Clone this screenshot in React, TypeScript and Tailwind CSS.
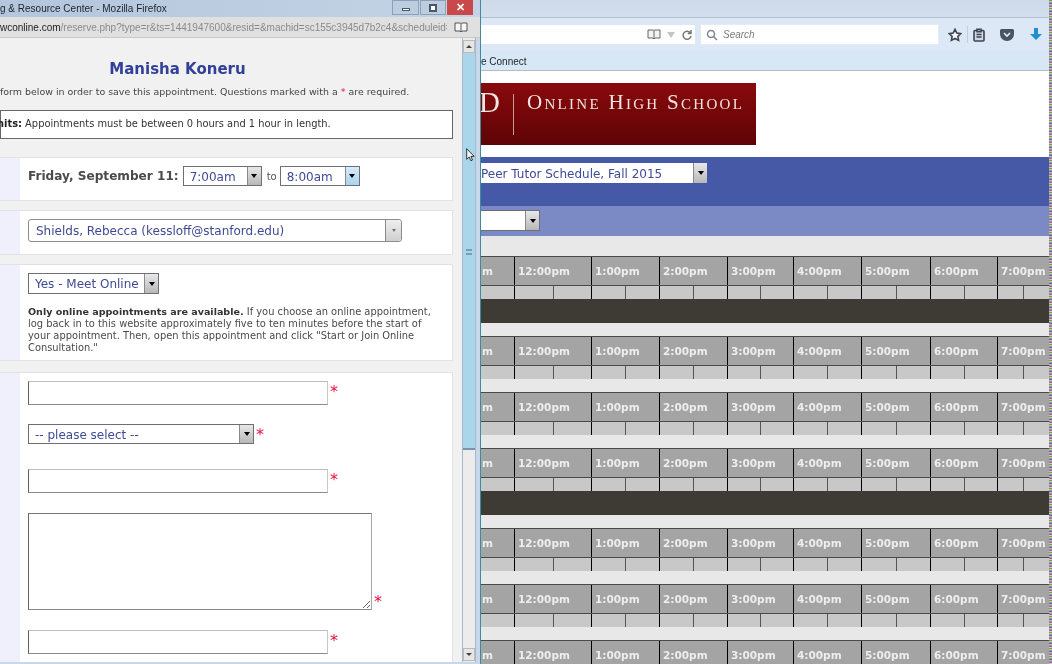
import type { ReactNode } from "react";

const VERDANA = "font-['DejaVu_Sans',sans-serif]";
const UI = "font-['Liberation_Sans',sans-serif]";

const HOURS = ["m", "12:00pm", "1:00pm", "2:00pm", "3:00pm", "4:00pm", "5:00pm", "6:00pm", "7:00pm"];
const DAYS = [true, false, false, true, false, false, false];
const COLS = "grid grid-cols-[33px_77px_68px_68px_66px_68px_69px_67px_52px]";

function Arrow({ small }: { small?: boolean }) {
  return small ? (
    <span className="h-0 w-0 border-x-[2px] border-t-[3px] border-x-transparent border-t-gray-500" />
  ) : (
    <span className="h-0 w-0 border-x-[3px] border-t-[4px] border-x-transparent border-t-black" />
  );
}

function Select({
  label,
  className,
  button = "w-[14px] bg-gradient-to-b from-[#e8e8e8] to-[#b8b8b8]",
  small,
}: {
  label: string;
  className: string;
  button?: string;
  small?: boolean;
}) {
  return (
    <div className={`flex shrink-0 items-stretch border border-[#6c6f78] bg-white ${className}`}>
      <div className={`mt-[1px] flex-1 self-center overflow-hidden pl-[6px] text-[12px] leading-[16px] whitespace-nowrap text-[#3f4a94] ${VERDANA}`}>
        {label}
      </div>
      <div className={`flex items-center justify-center border-l border-[#8a8a8a] ${button}`}>
        <Arrow small={small} />
      </div>
    </div>
  );
}

function Star({ className = "" }: { className?: string }) {
  return <span className={`ml-[2px] text-[16px] leading-none text-[#e0103f] ${VERDANA} ${className}`}>*</span>;
}

function Section({ className, children }: { className: string; children: ReactNode }) {
  return (
    <div className={`flex border-y border-r border-[#e2e2e2] bg-white ${className}`}>
      <div className="w-[20px] shrink-0 bg-[#f0f0fd]" />
      <div className="min-w-0 flex-1 pl-[8px]">{children}</div>
    </div>
  );
}

function TextField({ className = "" }: { className?: string }) {
  return (
    <div className={`flex items-start ${className}`}>
      <input className="h-[24px] w-[300px] border border-[#c8c8c8] border-t-[#bdbdbd] border-l-[#5f5f5f] border-b-[#8a8a8a] bg-white" />
      <Star className="mt-[3px]" />
    </div>
  );
}

function Popup() {
  return (
    <div className={`flex w-[481px] shrink-0 flex-col overflow-hidden border-r border-[#3d8c9c] bg-[#c6d8ea] ${VERDANA}`}>
      <div className="flex h-[17px] shrink-0 items-center justify-between bg-gradient-to-r from-[#b4c6dc] to-[#c4d4e6] pr-[7px]">
        <span className={`-mt-[1px] text-[10px] whitespace-nowrap text-[#1b2430] ${UI}`}>
          g &amp; Resource Center - Mozilla Firefox
        </span>
        <div className="flex items-start self-start">
          <div className="flex h-[15px] w-[27px] items-center justify-center border border-[#8ea0b6] bg-[#bccde0]">
            <span className="mt-[3px] h-[3px] w-[8px] border border-[#4b5668] bg-white" />
          </div>
          <div className="ml-[1px] flex h-[15px] w-[26px] items-center justify-center border border-[#8ea0b6] bg-[#bccde0]">
            <span className="h-[8px] w-[8px] border-2 border-[#4b5668] bg-white" />
          </div>
          <div className={`ml-[1px] flex h-[15px] w-[26px] items-center justify-center bg-[#c9484a] text-[11px] font-bold text-white ${UI}`}>
            ✕
          </div>
        </div>
      </div>
      <div className="flex h-[21px] shrink-0 items-center border-b border-[#c8c8c8] bg-[#e0e0e0] pr-[12px]">
        <div className={`mt-[1px] flex-1 overflow-hidden text-[10px] whitespace-nowrap text-[#8a8a8a] ${UI}`}>
          <span className="text-[#222]">wconline.com</span>/reserve.php?type=r&amp;ts=1441947600&amp;resid=&amp;machid=sc155c3945d7b2c4&amp;scheduleid=
        </div>
        <svg viewBox="0 0 14 11" className="ml-[7px] h-[11px] w-[14px] shrink-0" fill="#f6f6f6" stroke="#555">
          <path d="M1 1h5.500l.5.5.5-.5H13v8H8l-1 1-1-1H1zM7 1.500V9" />
        </svg>
      </div>

      <div className="flex min-h-0 flex-1">
        <div className="w-[462px] shrink-0 overflow-hidden bg-[#f1f1f1] pr-[9px]">
          <h1 className="mt-[21px] ml-[-98px] text-center text-[15px] leading-[20px] font-bold text-[#33409a]">
            Manisha Koneru
          </h1>
          <p className="mt-[7px] text-[9.45px] leading-[12px] whitespace-nowrap text-[#444]">
            form below in order to save this appointment. Questions marked with a <span className="text-[#e0103f]">*</span> are required.
          </p>
          <div className="mt-[12px] flex h-[29px] items-center border border-[#666] bg-white text-[9.9px] whitespace-nowrap text-[#333]">
            <span className="-ml-[4px] font-bold text-[#222]">nits:</span>&nbsp;Appointments must be between 0 hours and 1 hour in length.
          </div>

          <Section className="mt-[18px] h-[44px]">
            <div className="flex h-full items-center pb-[6px]">
              <span className="text-[12.1px] font-bold whitespace-nowrap text-[#4a4a4a]">Friday, September 11:</span>
              <Select label="7:00am" className="ml-[4px] h-[20px] w-[79px]" />
              <span className="ml-[5px] text-[10px] text-[#555]">to</span>
              <Select
                label="8:00am"
                className="ml-[3px] h-[20px] w-[80px]"
                button="w-[14px] bg-gradient-to-b from-[#d6ecfa] to-[#a9d3ee]"
              />
            </div>
          </Section>

          <Section className="mt-[9px] h-[45px]">
            <Select
              label="Shields, Rebecca (kessloff@stanford.edu)"
              className="mt-[8px] h-[23px] w-[374px] rounded-[3px] border-[#8c8c8c] pl-[1px]"
              button="w-[16px] rounded-r-[3px] bg-gradient-to-b from-[#efefef] to-[#cfcfcf]"
              small
            />
          </Section>

          <Section className="mt-[9px] h-[97px]">
            <Select label="Yes - Meet Online" className="mt-[8px] h-[21px] w-[131px] pr-0" />
            <p className="mt-[12px] w-[412px] text-[9.9px] leading-[12px] text-[#4a4a4a]">
              <b className="text-[9.55px] text-[#333]">Only online appointments are available.</b> If you choose an online appointment,
              <br />
              log back in to this website approximately five to ten minutes before the start of
              <br />
              your appointment. Then, open this appointment and click "Start or Join Online
              <br />
              Consultation."
            </p>
          </Section>

          <Section className="mt-[11px] h-[300px]">
            <TextField className="mt-[8px]" />
            <div className="mt-[19px] flex items-start">
              <Select label="-- please select --" className="h-[20px] w-[226px]" />
              <Star className="mt-[3px]" />
            </div>
            <TextField className="mt-[25px]" />
            <div className="mt-[20px] flex items-end">
              <textarea className="block h-[97px] w-[344px] border border-[#a8a8a8] border-t-[#777] border-l-[#666] border-b-[#888] bg-white" />
              <Star />
            </div>
            <TextField className="mt-[20px]" />
          </Section>
        </div>

        <div className="flex w-[14px] shrink-0 flex-col border-x border-[#a9b8c8] bg-[#ececec]">
          <div className="mt-[2px] flex h-[13px] shrink-0 items-center justify-center border border-[#bbb] bg-[#e6e6e6]">
            <span className="h-0 w-0 border-x-[3px] border-b-[3px] border-x-transparent border-b-[#444]" />
          </div>
          <div className="relative h-[397px] shrink-0 border-b-2 border-[#7d93ad] bg-[#a9d6ea]">
            <div className="absolute top-[196px] left-[3px] h-[6px] w-[6px] border-y-2 border-[#7f9cb5]" />
          </div>
          <div className="flex-1" />
          <div className="mb-[1px] flex h-[13px] shrink-0 items-center justify-center border border-[#bbb] bg-[#e6e6e6]">
            <span className="h-0 w-0 border-x-[3px] border-t-[3px] border-x-transparent border-t-[#444]" />
          </div>
        </div>
        <div className="w-[4px] shrink-0" />
      </div>
      <div className="h-[2px] shrink-0" />
    </div>
  );
}

function BrowserBar() {
  return (
    <>
      <div className="h-[17px] shrink-0 bg-gradient-to-b from-[#cddaea] to-[#d3dfec]" />
      <div className="flex h-[33px] shrink-0 items-center border-t border-[#b3bfcc] bg-[#dce8f5] pt-[1px]">
        <div className="flex h-[19px] w-[214px] items-center justify-end gap-[6px] bg-white pr-[2px]">
          <svg viewBox="0 0 14 11" className="h-[11px] w-[14px]" fill="#f2f2f2" stroke="#666">
            <path d="M1 1h5.500l.5.5.5-.5H13v8H8l-1 1-1-1H1zM7 1.500V9" />
          </svg>
          <span className="h-0 w-0 border-x-[4px] border-t-[6px] border-x-transparent border-t-[#c4c4c4]" />
          <svg viewBox="0 0 12 12" className="h-[12px] w-[12px]" fill="none" stroke="#777" strokeWidth="1.5">
            <path d="M9.500 4.200A4 4 0 1 0 10 7M10 1v3.400H6.700" />
          </svg>
        </div>
        <div className="ml-[6px] flex h-[19px] w-[237px] items-center bg-white pl-[5px] shadow-[0_0_0_1px_#e3ebf4]">
          <svg viewBox="0 0 12 12" className="h-[12px] w-[12px]" fill="none" stroke="#7d8590" strokeWidth="1.5">
            <circle cx="5" cy="5" r="3.500" />
            <path d="M7.700 7.700 11 11" />
          </svg>
          <span className={`ml-[5px] text-[10px] text-[#7a7a7a] italic ${UI}`}>Search</span>
        </div>
        <svg viewBox="0 0 14 14" className="ml-[10px] h-[14px] w-[14px]" fill="#f4f7fb" stroke="#3c4450" strokeWidth="1.6">
          <path d="m7 1.300 1.800 3.700 4 .6-2.900 2.800.7 4L7 10.500l-3.600 1.900.7-4-2.900-2.800 4-.6z" />
        </svg>
        <div className="ml-[5px] h-[17px] w-px bg-[#c2cfdd]" />
        <svg viewBox="0 0 12 14" className="ml-[5px] h-[14px] w-[12px]" fill="#cfd7e0" stroke="#3c4450" strokeWidth="1.6">
          <rect x="1" y="2.500" width="10" height="10.500" rx="1" />
          <path d="M4 1.200h4v2.400H4zM3.500 6.500h5M3.500 9h5" />
        </svg>
        <svg viewBox="0 0 14 12" className="ml-[15px] h-[12px] w-[14px]">
          <path d="M1.500 0h11A1.500 1.500 0 0 1 14 1.500V5a7 7 0 0 1-14 0V1.500A1.500 1.500 0 0 1 1.500 0" fill="#4a5460" />
          <path d="m4 4 3 3 3-3" fill="none" stroke="#e6eef6" strokeWidth="1.6" />
        </svg>
        <svg viewBox="0 0 12 14" className="ml-[16px] h-[14px] w-[12px]" fill="#1f8fcf">
          <path d="M4 0h4v6h4l-6 6-6-6h4z" />
        </svg>
      </div>
      <div className="flex h-[21px] shrink-0 items-center border-b border-[#aebccb] bg-[#d8e7f6] pt-[2px]">
        <span className={`text-[10px] text-[#20262e] ${UI}`}>e Connect</span>
      </div>
    </>
  );
}

function ScheduleRow({ dark }: { dark: boolean }) {
  return (
    <div className="shrink-0">
      <div className={`${COLS} h-[30px] border-y border-[#4a4a4a] bg-[#a4a4a4]`}>
        {HOURS.map((h, i) => (
          <div
            key={h}
            className={`flex items-center pt-[2px] text-[10.5px] font-bold whitespace-nowrap text-[#eeeeee] ${VERDANA} ${i === 0 ? "pl-[1px]" : "border-l border-black pl-[3px]"}`}
          >
            {h}
          </div>
        ))}
      </div>
      <div className={`${COLS} h-[13px] bg-[#c8c8c8]`}>
        {HOURS.map((h, i) =>
          i === 0 ? (
            <div key={h} />
          ) : (
            <div key={h} className="flex border-l border-black">
              <div className="flex-1 border-r border-[#555]" />
              <div className="flex-1" />
            </div>
          ),
        )}
      </div>
      {dark ? <div className="h-[24px] bg-[#3e3b34]" /> : null}
      <div className="h-[13px] bg-[#e8e8e8]" />
    </div>
  );
}

function Schedule() {
  return (
    <div className="flex min-w-0 flex-1 flex-col overflow-hidden bg-white">
      <BrowserBar />
      <div className="h-[12px] shrink-0" />
      <div className="flex h-[62px] w-[275px] shrink-0 items-center bg-gradient-to-b from-[#8a0a0c] to-[#5e0406] font-['Liberation_Serif',serif] text-[#f2e4e0]">
        <span className="-ml-[2px] mt-[-24px] text-[29px] leading-none">D</span>
        <div className="ml-[13px] h-[41px] w-px shrink-0 bg-[#c99a96]" />
        <span className="mt-[-24px] ml-[13px] text-[21px] leading-none tracking-[2.3px] whitespace-nowrap [font-variant:small-caps]">
          Online High School
        </span>
      </div>
      <div className="h-[12px] shrink-0" />
      <div className="h-[49px] shrink-0 bg-[#4659a6] pt-[6px]">
        <Select label="Peer Tutor Schedule, Fall 2015" className="-ml-[6px] h-[20px] w-[232px] border-0" />
      </div>
      <div className="h-[30px] shrink-0 bg-[#7b8ac4] pt-[4px]">
        <Select label="" className="-ml-[1px] h-[21px] w-[60px]" />
      </div>
      <div className="h-[20px] shrink-0 bg-[#e8e8e8]" />
      {DAYS.map((dark, i) => (
        <ScheduleRow key={i} dark={dark} />
      ))}
    </div>
  );
}

export default function App() {
  return (
    <div className="relative flex h-[664px] w-[1052px] overflow-hidden bg-white blur-[0.3px]">
      <Popup />
      <Schedule />
      <div className="w-[3px] shrink-0 bg-[repeating-linear-gradient(180deg,#5a7a3c_0px,#e8e0c0_2px,#3a4a8c_3px,#c8e0d8_5px,#8a3a5c_6px,#f0f0e0_8px)]" />
      <svg viewBox="0 0 9 14" className="absolute top-[148px] left-[466px] h-[14px] w-[9px]" fill="#f4f4f4" stroke="#222" strokeWidth="0.9">
        <path d="M.7.700v10.600l2.500-2.300 1.600 3.700 1.700-.7-1.600-3.600h3.300z" />
      </svg>
    </div>
  );
}
